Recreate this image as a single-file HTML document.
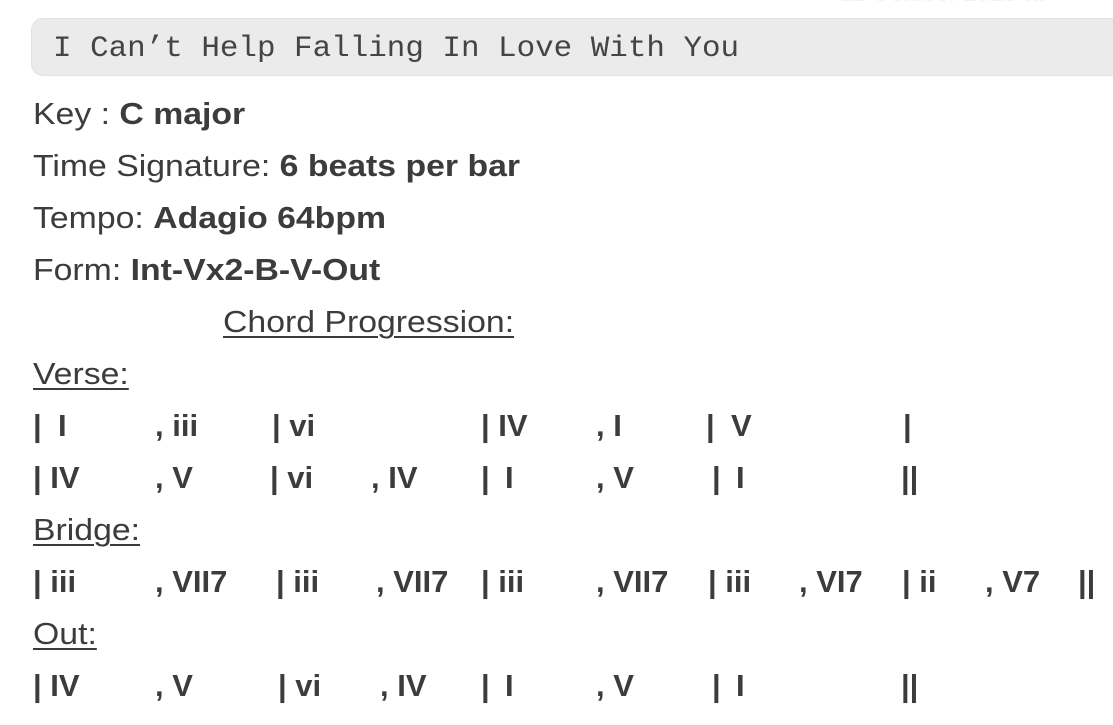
<!DOCTYPE html>
<html><head><style>
body{margin:0;width:1113px;height:725px;background:#fff;overflow:hidden;position:relative;font-family:"Liberation Sans",sans-serif;color:#3c3c3c}
.box{position:absolute;left:31px;top:18px;width:1110px;height:58px;background:#ebebeb;border-radius:12px;border:1px solid #e2e2e2;box-sizing:border-box}
.mono{position:absolute;left:53px;top:32px;font-family:"Liberation Mono",monospace;font-size:30px;color:#444;white-space:pre;transform:scaleX(1.03);transform-origin:left}
.t{position:absolute;font-size:31px;white-space:pre;line-height:1}
.s{transform:scaleX(1.09);transform-origin:left}
b{font-weight:bold}
.u{text-decoration:underline;text-decoration-thickness:2px;text-underline-offset:4px}
.c{font-weight:bold}
</style></head><body>
<div style="position:absolute;left:840px;top:-20px;font-size:24px;color:#f2f2f2">11 October 2023 at</div>
<div class="box"></div>
<div class="mono">I Can’t Help Falling In Love With You</div>
<div class="t s" style="left:33px;top:98px">Key : <b>C major</b></div>
<div class="t s" style="left:33px;top:150px">Time Signature: <b>6 beats per bar</b></div>
<div class="t s" style="left:33px;top:202px">Tempo: <b>Adagio 64bpm</b></div>
<div class="t s" style="left:33px;top:254px">Form: <b>Int-Vx2-B-V-Out</b></div>
<div class="t u s" style="left:223px;top:306px">Chord Progression:</div>
<div class="t u s" style="left:33px;top:358px">Verse:</div>
<div class="t u s" style="left:33px;top:514px">Bridge:</div>
<div class="t u s" style="left:33px;top:618px">Out:</div>

<div class="t c" style="left:33px;top:410px">|</div><div class="t c" style="left:58px;top:410px">I</div><div class="t c" style="left:155px;top:410px">, iii</div><div class="t c" style="left:272px;top:410px">| vi</div><div class="t c" style="left:481px;top:410px">| IV</div><div class="t c" style="left:596px;top:410px">, I</div><div class="t c" style="left:706px;top:410px">|</div><div class="t c" style="left:731px;top:410px">V</div><div class="t c" style="left:903px;top:410px">|</div>

<div class="t c" style="left:33px;top:462px">| IV</div><div class="t c" style="left:155px;top:462px">, V</div><div class="t c" style="left:270px;top:462px">| vi</div><div class="t c" style="left:371px;top:462px">, IV</div><div class="t c" style="left:481px;top:462px">|</div><div class="t c" style="left:505px;top:462px">I</div><div class="t c" style="left:596px;top:462px">, V</div><div class="t c" style="left:712px;top:462px">|</div><div class="t c" style="left:736px;top:462px">I</div><div class="t c" style="left:901px;top:462px">||</div>

<div class="t c" style="left:33px;top:566px">| iii</div><div class="t c" style="left:155px;top:566px">, VII7</div><div class="t c" style="left:276px;top:566px">| iii</div><div class="t c" style="left:376px;top:566px">, VII7</div><div class="t c" style="left:481px;top:566px">| iii</div><div class="t c" style="left:596px;top:566px">, VII7</div><div class="t c" style="left:708px;top:566px">| iii</div><div class="t c" style="left:799px;top:566px">, VI7</div><div class="t c" style="left:902px;top:566px">| ii</div><div class="t c" style="left:985px;top:566px">, V7</div><div class="t c" style="left:1078px;top:566px">||</div>

<div class="t c" style="left:33px;top:670px">| IV</div><div class="t c" style="left:155px;top:670px">, V</div><div class="t c" style="left:278px;top:670px">| vi</div><div class="t c" style="left:380px;top:670px">, IV</div><div class="t c" style="left:481px;top:670px">|</div><div class="t c" style="left:505px;top:670px">I</div><div class="t c" style="left:596px;top:670px">, V</div><div class="t c" style="left:712px;top:670px">|</div><div class="t c" style="left:736px;top:670px">I</div><div class="t c" style="left:901px;top:670px">||</div>
</body></html>
